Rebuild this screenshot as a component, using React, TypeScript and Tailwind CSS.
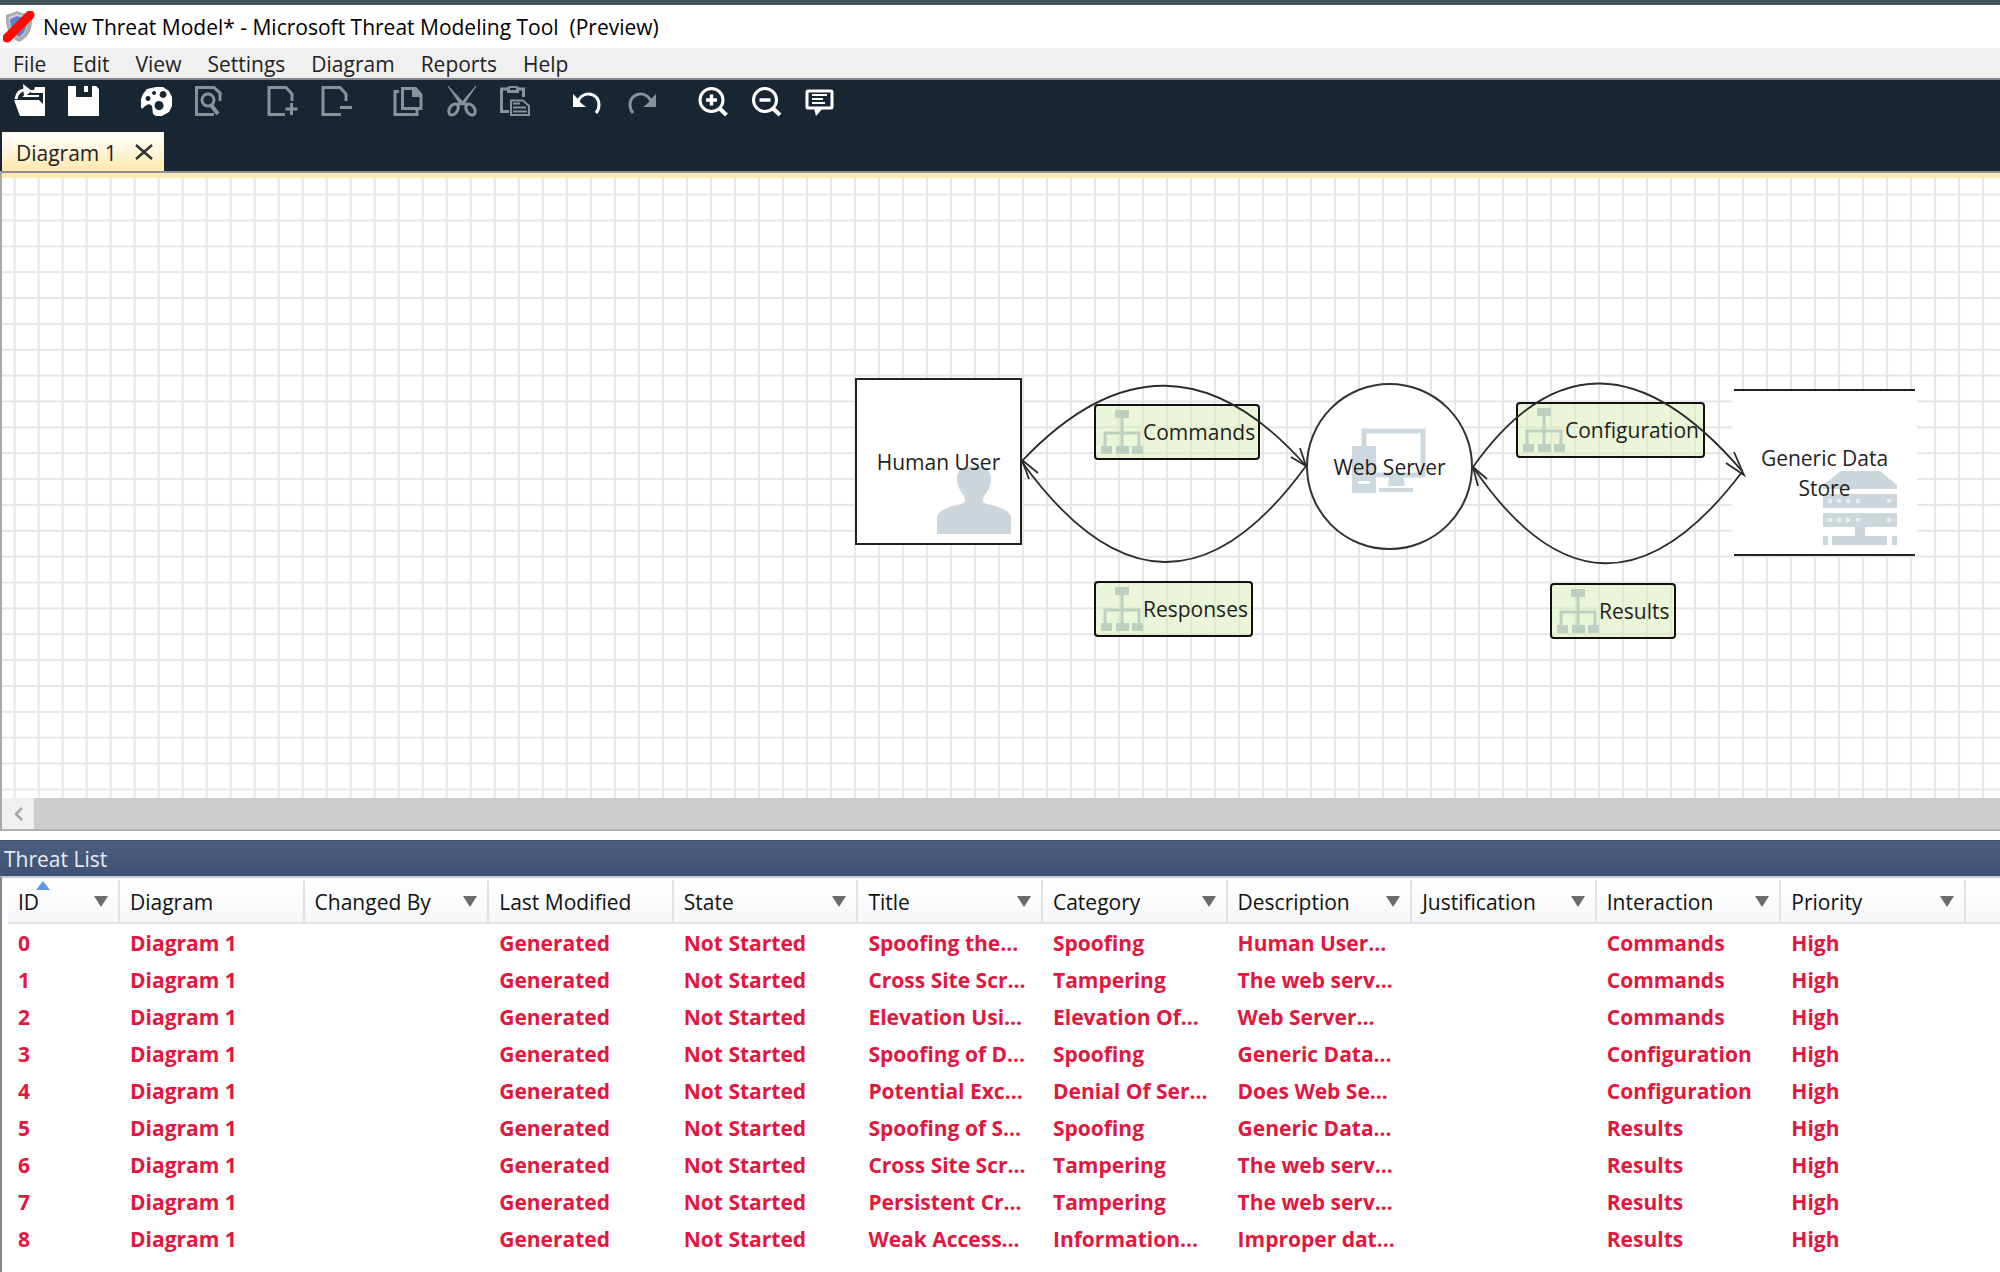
import type { ReactNode } from 'react';

type Tool = {
  label: string;
  icon: ReactNode;
  disabled?: boolean;
};

type FlowLabel = {
  name: string;
  box: string;
};

type Column = {
  label: string;
  filter?: boolean;
  sorted?: boolean;
};

const MENU = ['File', 'Edit', 'View', 'Settings', 'Diagram', 'Reports', 'Help'];

const TOOL_GROUPS: Tool[][] = [
  [
    {
      label: 'Open',
      icon: (
        <>
          <path d="M1 15h25l4 4V8H18V5h3l1-3h10v29H7z" fill="currentColor" />
          <path d="M3 14C4 8 7 5 12 5" stroke="currentColor" strokeWidth="3" fill="none" />
          <path d="M10 -1l9 7-8 6z" fill="currentColor" />
          <path d="M9 12l3-2h14v2z" fill="currentColor" />
        </>
      ),
    },
    {
      label: 'Save',
      icon: <path d="M1 1h8v11h16V1h4l3 3v27H1zM17 1h4v6h-4z" fill="currentColor" />,
    },
  ],
  [
    {
      label: 'Home',
      icon: (
        <path
          fillRule="evenodd"
          fill="currentColor"
          d="M17 2h7l6 4 3 6v9l-3 6-7 4h-6l-3-2-1-8-3-2-4 2-3 3-1-2v-8l2-5 4-5zM15 6a2 2 0 1 0 .1 0zM24 6a3.500 3.500 0 1 0 .1 0zM9 11a2.500 2.500 0 1 0 .1 0zM20 16a4.500 4.500 0 1 0 .1 0z"
        />
      ),
    },
    {
      label: 'Find',
      disabled: true,
      icon: (
        <g stroke="currentColor" strokeWidth="3" fill="none">
          <path d="M27 16V8l-6-5.500H3.500v27H21" />
          <circle cx="15" cy="15" r="6" />
          <path d="M18 20l7 9" strokeWidth="4" />
        </g>
      ),
    },
  ],
  [
    {
      label: 'Add diagram',
      disabled: true,
      icon: (
        <g stroke="currentColor" strokeWidth="3" fill="none">
          <path d="M27 16V9l-6-6.500H4v27h16" />
          <path d="M26.500 18v12M20.500 24h12" />
        </g>
      ),
    },
    {
      label: 'Delete diagram',
      disabled: true,
      icon: (
        <g stroke="currentColor" strokeWidth="3" fill="none">
          <path d="M27 16V9l-6-6.500H4v27h18" />
          <path d="M21 22.500h12" />
        </g>
      ),
    },
  ],
  [
    {
      label: 'Copy',
      disabled: true,
      icon: (
        <>
          <path d="M8 6.500H4v23h22V25" stroke="currentColor" strokeWidth="3" fill="none" />
          <path d="M11.500 3.500h13l5.500 6v14H11.500z" stroke="currentColor" strokeWidth="3" fill="none" />
          <path d="M21 2h4l6 7v3H21z" fill="currentColor" />
        </>
      ),
    },
    {
      label: 'Cut',
      disabled: true,
      icon: (
        <>
          <path d="M3 1l14 15 2 4-4-1zM31 1L18 16l-3 4 4-1z" fill="currentColor" stroke="currentColor" />
          <g stroke="currentColor" strokeWidth="3" fill="none">
            <ellipse cx="8.500" cy="24.500" rx="4" ry="6" transform="rotate(35 8.500 24.500)" />
            <ellipse cx="25.500" cy="24.500" rx="4" ry="6" transform="rotate(-35 25.500 24.500)" />
            <path d="M12 19.500l5-1.500 5 1.500" />
          </g>
        </>
      ),
    },
    {
      label: 'Paste',
      disabled: true,
      icon: (
        <>
          <path d="M10 26.500H2.500V4H8M19 4h5.500v8" stroke="currentColor" strokeWidth="3" fill="none" />
          <path fillRule="evenodd" d="M8 2l3-1h6l3 1v6H8zM11 3v2h6V3z" fill="currentColor" />
          <path d="M12 15.500h12l6 5.500v9H12z" stroke="currentColor" strokeWidth="2" fill="none" />
          <path d="M14 18.500h7M14 22.500h13M14 26.500h14" stroke="currentColor" strokeWidth="2" fill="none" />
        </>
      ),
    },
  ],
  [
    {
      label: 'Undo',
      icon: (
        <>
          <path d="M2 9v13h13l-5-4-4-5z" fill="currentColor" />
          <path d="M7 16c4-8 13-9 18-4 4 4 4 11 0 16" stroke="currentColor" strokeWidth="3" fill="none" />
        </>
      ),
    },
    {
      label: 'Redo',
      disabled: true,
      icon: (
        <>
          <path d="M31 9v13H18l5-4 4-5z" fill="currentColor" />
          <path d="M26 16C22 8 13 7 8 12c-4 4-4 11 0 16" stroke="currentColor" strokeWidth="3" fill="none" />
        </>
      ),
    },
  ],
  [
    {
      label: 'Zoom in',
      icon: (
        <g stroke="currentColor" strokeWidth="3" fill="none">
          <circle cx="14.500" cy="15" r="11.500" />
          <path d="M22 23l7.500 7" strokeWidth="4" />
          <path d="M14.500 9.500v11M9 15h11" strokeWidth="3.500" />
        </g>
      ),
    },
    {
      label: 'Zoom out',
      icon: (
        <g stroke="currentColor" strokeWidth="3" fill="none">
          <circle cx="14" cy="15" r="11.500" />
          <path d="M21.500 23l7.500 7" strokeWidth="4" />
          <path d="M8.500 15h11" strokeWidth="3.500" />
        </g>
      ),
    },
    {
      label: 'Feedback',
      icon: (
        <>
          <rect x="2" y="6" width="25" height="17" rx="1" stroke="currentColor" strokeWidth="3" fill="none" />
          <path d="M9 23h9l-7 8z" fill="currentColor" />
          <path d="M7 10h15M7 14h11M7 18h13" stroke="currentColor" strokeWidth="2" />
        </>
      ),
    },
  ],
];

// left / top are relative to the drawing surface
const FLOW_LABELS: FlowLabel[] = [
  { name: 'Commands', box: 'left-[1092px] top-[226px] w-[166px]' },
  { name: 'Responses', box: 'left-[1092px] top-[403px] w-[159px]' },
  { name: 'Configuration', box: 'left-[1514px] top-[224px] w-[189px]' },
  { name: 'Results', box: 'left-[1548px] top-[405px] w-[126px]' },
];

const COLUMNS: Column[] = [
  { label: 'ID', filter: true, sorted: true },
  { label: 'Diagram' },
  { label: 'Changed By', filter: true },
  { label: 'Last Modified' },
  { label: 'State', filter: true },
  { label: 'Title', filter: true },
  { label: 'Category', filter: true },
  { label: 'Description', filter: true },
  { label: 'Justification', filter: true },
  { label: 'Interaction', filter: true },
  { label: 'Priority', filter: true },
];

const THREATS = [
  { title: 'Spoofing the...', category: 'Spoofing', description: 'Human User...', interaction: 'Commands' },
  { title: 'Cross Site Scr...', category: 'Tampering', description: 'The web serv...', interaction: 'Commands' },
  { title: 'Elevation Usi...', category: 'Elevation Of...', description: 'Web Server...', interaction: 'Commands' },
  { title: 'Spoofing of D...', category: 'Spoofing', description: 'Generic Data...', interaction: 'Configuration' },
  { title: 'Potential Exc...', category: 'Denial Of Ser...', description: 'Does Web Se...', interaction: 'Configuration' },
  { title: 'Spoofing of S...', category: 'Spoofing', description: 'Generic Data...', interaction: 'Results' },
  { title: 'Cross Site Scr...', category: 'Tampering', description: 'The web serv...', interaction: 'Results' },
  { title: 'Persistent Cr...', category: 'Tampering', description: 'The web serv...', interaction: 'Results' },
  { title: 'Weak Access...', category: 'Information...', description: 'Improper dat...', interaction: 'Results' },
];

function AppLogo() {
  return (
    <svg viewBox="0 0 32 32" className="size-8" aria-hidden="true">
      <path d="M3 4l6-2 5-2 5 2 10 2c1 12-2 22-13 27C6 26 2 16 3 4z" fill="#a9adb0" />
      <path d="M6 6l8-3 11 3c0 10-2 17-9 21C9 23 5 15 6 6z" fill="#cfd4d8" />
      <path d="M7 8l7-3 10 3c0 8-2 14-8 18-6-4-9-10-9-18z" fill="#5c83cc" />
      <path d="M4 27L27 4" stroke="#ff0a00" strokeWidth="9" strokeLinecap="round" />
    </svg>
  );
}

function TitleBar() {
  return (
    <header className="flex h-[43px] items-center gap-2 bg-white pl-[3px]">
      <AppLogo />
      <h1 className="text-[21px] leading-7 whitespace-pre text-black">
        {'New Threat Model* - Microsoft Threat Modeling Tool  (Preview)'}
      </h1>
    </header>
  );
}

function MenuBar() {
  return (
    <nav className="flex h-8 items-center border-b-2 border-[#7f858b] bg-[#f0f0f0] pt-0.5">
      {MENU.map((item) => (
        <button key={item} type="button" className="px-[13px] text-[21px] leading-7 text-[#222]">
          {item}
        </button>
      ))}
    </nav>
  );
}

function Toolbar() {
  return (
    <div role="toolbar" className="flex gap-[18px] pt-[5px] pl-0.5">
      {TOOL_GROUPS.map((group) => (
        <div key={group[0].label} className="flex">
          {group.map((tool) => (
            <button
              key={tool.label}
              type="button"
              aria-label={tool.label}
              disabled={tool.disabled}
              className="flex w-[54px] justify-center text-white disabled:text-[#89929a]"
            >
              <svg viewBox="0 0 32 32" className="size-8 overflow-visible">
                {tool.icon}
              </svg>
            </button>
          ))}
        </div>
      ))}
    </div>
  );
}

function DiagramTab() {
  return (
    <div className="mt-[15px] ml-0.5 flex h-[39px] w-fit items-center gap-[18px] border-t border-r border-[#fff6dd] bg-linear-to-b from-white to-[#ffe8ab] pr-[10px] pl-[14px]">
      <button type="button" role="tab" aria-selected="true" className="pt-0.5 text-[21px] leading-7 text-[#222]">
        Diagram 1
      </button>
      <button type="button" aria-label="Close Diagram 1" className="text-[#333]">
        <svg viewBox="0 0 18 16" className="h-4 w-[18px]">
          <path d="M1 1l16 14M17 1L1 15" stroke="currentColor" strokeWidth="2.500" />
        </svg>
      </button>
    </div>
  );
}

function FlowIcon() {
  return (
    <svg viewBox="0 0 42 44" className="h-11 w-[42px] shrink-0 text-[#bccfc1]" aria-hidden="true">
      <path d="M14 0h14v8H14zM0 36h11v8H0zM15 36h13v8H15zM31 36h11v8H31z" fill="currentColor" />
      <path d="M21 8v28M4 36V23h34v13" stroke="currentColor" strokeWidth="3" fill="none" />
    </svg>
  );
}

function PersonIcon() {
  return (
    <svg viewBox="0 0 74 68" className="h-[68px] w-[74px]" aria-hidden="true">
      <path
        d="M0 68V50c4-7 14-10 24-12 4-1 5-3 3-8-5-6-7-12-7-18C20 4 27 0 37 0s17 4 17 12c0 7-2 13-7 18-2 5-1 7 3 8 10 2 20 5 24 12v18z"
        fill="#ccd6db"
      />
    </svg>
  );
}

function ComputerIcon() {
  return (
    <svg viewBox="0 0 74 65" className="h-[65px] w-[74px]" aria-hidden="true">
      <path d="M12 18V3h59v44H24" stroke="#ccd9e0" strokeWidth="5" fill="none" />
      <path d="M0 18h24v47H0zM37 49h14l2 9H36z" fill="#ccd9e0" />
      <path d="M27 62h34" stroke="#ccd9e0" strokeWidth="4" />
      <path d="M6 53h12v3H6z" fill="#fff" />
    </svg>
  );
}

function ServerIcon() {
  return (
    <svg viewBox="0 0 74 74" className="size-[74px]" aria-hidden="true">
      <path d="M18 0h39l17 14v4H0v-4zM0 23h74v14H0zM0 42h74v14H42v9h22v9H9v-9h23v-9H0zM0 65h5v9H0zM69 65h5v9h-5z" fill="#ccd6db" />
      <g fill="#e8eef1">
        <path d="M5 28h4v4H5zM14 28h4v4h-4zM23 28h4v4h-4zM33 28h4v4h-4zM64 28h4v4h-4z" />
        <path d="M5 47h4v4H5zM14 47h4v4h-4zM23 47h4v4h-4zM33 47h4v4h-4zM64 47h4v4h-4z" />
      </g>
    </svg>
  );
}

function Grid() {
  return (
    <svg className="absolute inset-0 size-full" aria-hidden="true">
      <defs>
        <pattern id="grid" x="11.700" y="15.600" width="24.006" height="25.860" patternUnits="userSpaceOnUse">
          <path d="M0 1h25M1 0v26" stroke="#e5e5e5" strokeWidth="1.800" />
        </pattern>
      </defs>
      <rect width="100%" height="100%" fill="url(#grid)" />
    </svg>
  );
}

function FlowLines() {
  return (
    <svg className="absolute inset-0 size-full text-[#2b2b2b]" aria-hidden="true">
      <g stroke="currentColor" strokeWidth="1.800" fill="none">
        <path d="M1020 283Q1165 130 1304 288" />
        <path d="M1289 279l15 9-6-18" />
        <path d="M1304 288Q1163 482 1020 284" />
        <path d="M1036 295l-16-13 7 19" />
        <path d="M1471 289Q1591 120 1740 293" />
        <path d="M1724 285l18 12-10-23" />
        <path d="M1740 294Q1600 479 1471 289" />
        <path d="M1485 301l-14-12 5 19" />
      </g>
    </svg>
  );
}

function Canvas() {
  return (
    <main className="relative min-h-[560px] flex-1 overflow-hidden bg-white text-[21px] leading-7 text-[#1e1e1e]">
      <Grid />

      <div className="absolute top-[200px] left-[853px] flex size-[167px] items-center justify-center border-2 border-[#222] bg-white">
        <div className="absolute right-[9px] bottom-[9px]">
          <PersonIcon />
        </div>
        <span className="relative">Human User</span>
      </div>

      <div className="absolute top-[205px] left-[1304px] flex size-[167px] items-center justify-center rounded-full border-2 border-[#333] bg-white">
        <div className="absolute top-[43px] left-[44px]">
          <ComputerIcon />
        </div>
        <span className="relative">Web Server</span>
      </div>

      <div className="absolute top-[211px] left-[1730px] h-[167px] w-[185px] bg-white px-0.5">
        <div className="flex size-full items-center justify-center border-y-2 border-[#222] px-5">
          <div className="absolute right-5 bottom-[11px]">
            <ServerIcon />
          </div>
          <span className="relative text-center leading-[30px]">
            Generic Data
            <br />
            Store
          </span>
        </div>
      </div>

      {FLOW_LABELS.map((flow) => (
        <div
          key={flow.name}
          className={`absolute flex h-14 items-center rounded-sm border-2 border-[#111] bg-[#d7edb3]/50 pl-[5px] ${flow.box}`}
        >
          <FlowIcon />
          <span>{flow.name}</span>
        </div>
      ))}

      <FlowLines />
    </main>
  );
}

function HorizontalScroll() {
  return (
    <div className="flex h-[33px] border-b-2 border-[#b0b0b0] bg-[#cdcdcd]">
      <button type="button" aria-label="Scroll left" className="flex w-8 items-center justify-center bg-[#f0f0f0] text-[#a5a5a5]">
        <svg viewBox="0 0 9 14" className="h-[14px] w-[9px]">
          <path d="M8 1L2 7l6 6" stroke="currentColor" strokeWidth="2.500" fill="none" />
        </svg>
      </button>
    </div>
  );
}

function HeaderCell({ column }: { column: Column }) {
  return (
    <th scope="col" className="relative h-11 border-r-2 border-b-2 border-[#e0e2e4] bg-linear-to-b from-white to-[#f5f7f8] p-0 text-left font-normal">
      {column.sorted && (
        <svg viewBox="0 0 14 9" className="absolute top-px left-7 h-[9px] w-[14px]" aria-hidden="true">
          <path d="M7 0l7 9H0z" fill="#6296ea" />
        </svg>
      )}
      <div className="flex items-center justify-between px-[10px] pt-px">
        <span className="whitespace-nowrap">{column.label}</span>
        {column.filter && (
          <button type="button" aria-label={`Filter ${column.label}`}>
            <svg viewBox="0 0 14 11" className="h-[11px] w-[14px]">
              <path d="M0 0h14L7 11z" fill="#6b6b6b" />
            </svg>
          </button>
        )}
      </div>
    </th>
  );
}

function ThreatList() {
  return (
    <section className="text-[21px] leading-7">
      <h2 className="flex h-9 items-center border-t border-[#3a4c68] bg-linear-to-b from-[#4a5f80] to-[#3f5275] pl-1 text-[#e8ebf0]">
        Threat List
      </h2>
      <div className="border-t-2 border-l-2 border-t-[#c5c8cc] border-l-[#80868f] bg-white pt-0.5 pb-[15px] pl-[6px]">
        <table className="w-full table-fixed border-separate border-spacing-0">
          <colgroup>
            <col className="w-28" />
            <col span={10} />
            <col className="w-[34px]" />
          </colgroup>
          <thead className="text-[#111]">
            <tr>
              {COLUMNS.map((column) => (
                <HeaderCell key={column.label} column={column} />
              ))}
              <td className="border-b-2 border-[#e0e2e4] bg-linear-to-b from-white to-[#f5f7f8]" />
            </tr>
          </thead>
          <tbody className="font-bold text-[#e3173e]">
            {THREATS.map((threat, id) => (
              <tr key={id} className="h-[37px] whitespace-nowrap [&>td]:py-0 [&>td]:pl-[10px]">
                <td>{id}</td>
                <td>Diagram 1</td>
                <td />
                <td>Generated</td>
                <td>Not Started</td>
                <td>{threat.title}</td>
                <td>{threat.category}</td>
                <td>{threat.description}</td>
                <td />
                <td>{threat.interaction}</td>
                <td>High</td>
                <td />
              </tr>
            ))}
          </tbody>
        </table>
      </div>
    </section>
  );
}

export default function App() {
  return (
    <div className="flex min-h-screen flex-col overflow-hidden border-t-[5px] border-[#43545f] bg-white font-['Open_Sans','Noto_Sans',sans-serif]">
      <TitleBar />
      <MenuBar />
      <div className="bg-[#182634]">
        <Toolbar />
        <DiagramTab />
      </div>
      <div className="flex flex-1 flex-col border-t-2 border-l-2 border-t-[#8b8f92] border-l-[#a8a8a8]">
        <div className="h-[5px] bg-[#ffe9b8]" />
        <Canvas />
        <HorizontalScroll />
      </div>
      <div className="h-[9px] bg-white" />
      <ThreatList />
    </div>
  );
}
